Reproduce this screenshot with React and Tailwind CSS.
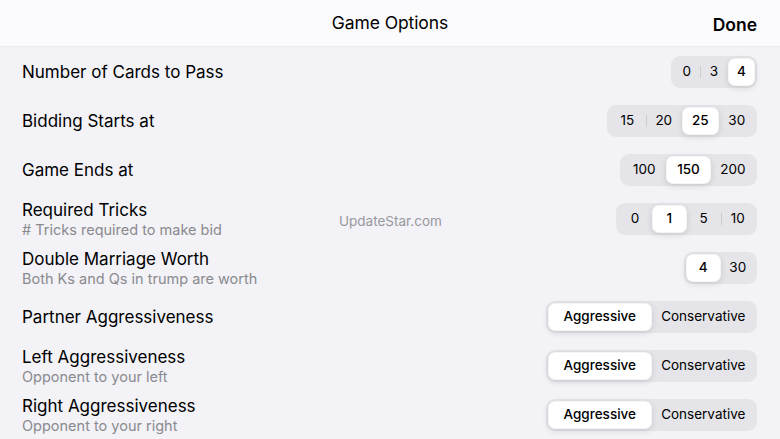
import React from 'react';

const rows = [
  { title: 'Number of Cards to Pass', options: ['0', '3', '4'], selected: 2, width: 'w-[86px]', cols: 'grid-cols-3' },
  { title: 'Bidding Starts at', options: ['15', '20', '25', '30'], selected: 2, width: 'w-[150px]', cols: 'grid-cols-4' },
  { title: 'Game Ends at', options: ['100', '150', '200'], selected: 1, width: 'w-[137px]', cols: 'grid-cols-3' },
  { title: 'Required Tricks', subtitle: '# Tricks required to make bid', options: ['0', '1', '5', '10'], selected: 1, width: 'w-[141px]', cols: 'grid-cols-4' },
  { title: 'Double Marriage Worth', subtitle: 'Both Ks and Qs in trump are worth', options: ['4', '30'], selected: 0, width: 'w-[73px]', cols: 'grid-cols-2' },
  { title: 'Partner Aggressiveness', options: ['Aggressive', 'Conservative'], selected: 0, width: 'w-[211px]', cols: 'grid-cols-2' },
  { title: 'Left Aggressiveness', subtitle: 'Opponent to your left', options: ['Aggressive', 'Conservative'], selected: 0, width: 'w-[211px]', cols: 'grid-cols-2' },
  { title: 'Right Aggressiveness', subtitle: 'Opponent to your right', options: ['Aggressive', 'Conservative'], selected: 0, width: 'w-[211px]', cols: 'grid-cols-2' },
];

function Segmented({ options, selected, width, cols }) {
  return (
    <div className={`grid ${cols} ${width} h-[32px] p-[2px] rounded-[9px] bg-[#e4e4e9]`}>
      {options.map((opt, i) => {
        const active = i === selected;
        // divider only between two unselected segments
        const divider = i > 0 && i !== selected && i - 1 !== selected;
        return (
          <div
            key={opt}
            className={`relative flex items-center justify-center rounded-[7px] text-[13.5px] text-black ${
              active ? 'bg-white font-medium shadow-[0_2px_6px_rgba(0,0,0,0.12)] border border-[rgba(0,0,0,0.04)]' : ''
            }`}
          >
            {divider && <span className="absolute left-0 top-[8px] h-[12px] w-px bg-[#cbcbd0]" />}
            {opt}
          </div>
        );
      })}
    </div>
  );
}

export default function App() {
  return (
    <div className="relative w-[780px] h-[439px] overflow-hidden bg-[#f2f2f7] font-['Inter',sans-serif] antialiased">
      <div className="relative h-[47px] bg-[#fbfbfd] border-b border-[#ececf0] flex items-center justify-center">
        <span className="text-[17.5px] text-black tracking-[-0.1px]">Game Options</span>
        <span className="absolute right-[23px] top-[12px] text-[17.5px] font-semibold text-black">Done</span>
      </div>

      {rows.map((row) => (
        <div key={row.title} className="h-[49px] flex items-center justify-between pl-[22px] pr-[23px]">
          <div className="flex flex-col pt-[1px]">
            <span className="text-[17px] leading-[21px] text-black">{row.title}</span>
            {row.subtitle && (
              <span className="text-[14.5px] leading-[18px] text-[#8a8a8e]">{row.subtitle}</span>
            )}
          </div>
          <Segmented {...row} />
        </div>
      ))}

      <span className="absolute left-[339px] top-[211px] text-[13.5px] text-[#98989d]">UpdateStar.com</span>
    </div>
  );
}
